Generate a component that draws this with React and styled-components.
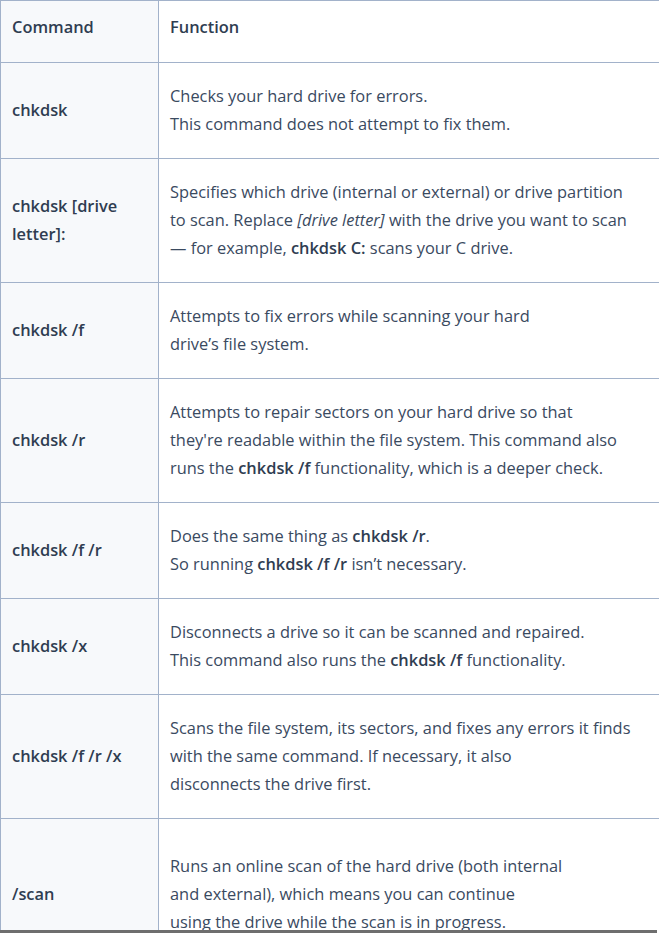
import React from 'react'
import styled, { createGlobalStyle } from 'styled-components';

const GlobalStyle = createGlobalStyle`
  html, body {
    margin: 0;
    padding: 0;
    background: #ffffff;
    overflow: hidden;
  }
  body {
    font-family: "Open Sans", Lato, sans-serif;
  }
`

const rows = [
  {
    cmd: 'chkdsk',
    lines: [
      <>Checks your hard drive for errors.</>,
      <>This command does not attempt to fix them.</>,
    ],
  },
  {
    cmd: <>chkdsk [drive<br />letter]:</>,
    lines: [
      <>Specifies which drive (internal or external) or drive partition</>,
      <>to scan. Replace <em>[drive letter]</em> with the drive you want to scan</>,
      <>— for example, <b>chkdsk C:</b> scans your C drive.</>,
    ],
  },
  {
    cmd: 'chkdsk /f',
    lines: [
      <>Attempts to fix errors while scanning your hard</>,
      <>drive’s file system.</>,
    ],
  },
  {
    cmd: 'chkdsk /r',
    lines: [
      <>Attempts to repair sectors on your hard drive so that</>,
      <>they're readable within the file system. This command also</>,
      <>runs the <b>chkdsk /f</b> functionality, which is a deeper check.</>,
    ],
  },
  {
    cmd: 'chkdsk /f /r',
    lines: [
      <>Does the same thing as <b>chkdsk /r</b>.</>,
      <>So running <b>chkdsk /f /r</b> isn’t necessary.</>,
    ],
  },
  {
    cmd: 'chkdsk /x',
    lines: [
      <>Disconnects a drive so it can be scanned and repaired.</>,
      <>This command also runs the <b>chkdsk /f</b> functionality.</>,
    ],
  },
  {
    cmd: 'chkdsk /f /r /x',
    lines: [
      <>Scans the file system, its sectors, and fixes any errors it finds</>,
      <>with the same command. If necessary, it also</>,
      <>disconnects the drive first.</>,
    ],
  },
  {
    cmd: '/scan',
    pad: 34,
    lines: [
      <>Runs an online scan of the hard drive (both internal</>,
      <>and external), which means you can continue</>,
      <>using the drive while the scan is in progress.</>,
    ],
  },
]

const App = () => {
  return (
    <>
      <GlobalStyle />
      <Table>
        <thead>
          <tr>
            <HeadCell $side>Command</HeadCell>
            <HeadCell>Function</HeadCell>
          </tr>
        </thead>
        <tbody>
          {rows.map((row, i) => (
            <tr key={i}>
              <CmdCell $pad={row.pad}>{row.cmd}</CmdCell>
              <TextCell $pad={row.pad}>
                {row.lines.map((line, j) => (
                  <Line key={j}>{line}</Line>
                ))}
              </TextCell>
            </tr>
          ))}
        </tbody>
      </Table>
      <BottomBar />
    </>
  )
}

export default App;

const Table = styled.table`
  border-collapse: collapse;
  table-layout: fixed;
  width: 700px;
  color: #3a4a5f;
  font-size: 16.4px;
  line-height: 28px;

  th, td {
    border: 1px solid #a2b2ca;
    text-align: left;
    vertical-align: middle;
  }
`

const HeadCell = styled.th`
  width: ${p => (p.$side ? '135px' : 'auto')};
  padding: 12px 11px 21px;
  font-weight: 600;
  color: #2f3d51;
  background: ${p => (p.$side ? '#f7f9fb' : '#ffffff')};
`

const CmdCell = styled.td`
  padding: ${p => (p.$pad || 20) - 1}px 11px ${p => p.$pad || 20}px;
  background: #f7f9fb;
  font-weight: 600;
  color: #2f3d51;
`

const TextCell = styled.td`
  padding: ${p => (p.$pad || 20) - 1}px 11px ${p => p.$pad || 20}px;
  background: #ffffff;

  b {
    font-weight: 600;
    color: #2f3d51;
  }
  em {
    font-style: italic;
  }
`

const Line = styled.div`
  white-space: nowrap;
`

const BottomBar = styled.div`
  position: fixed;
  left: 0;
  right: 2px;
  bottom: 0;
  height: 3px;
  background: #6e6e6e;
`
